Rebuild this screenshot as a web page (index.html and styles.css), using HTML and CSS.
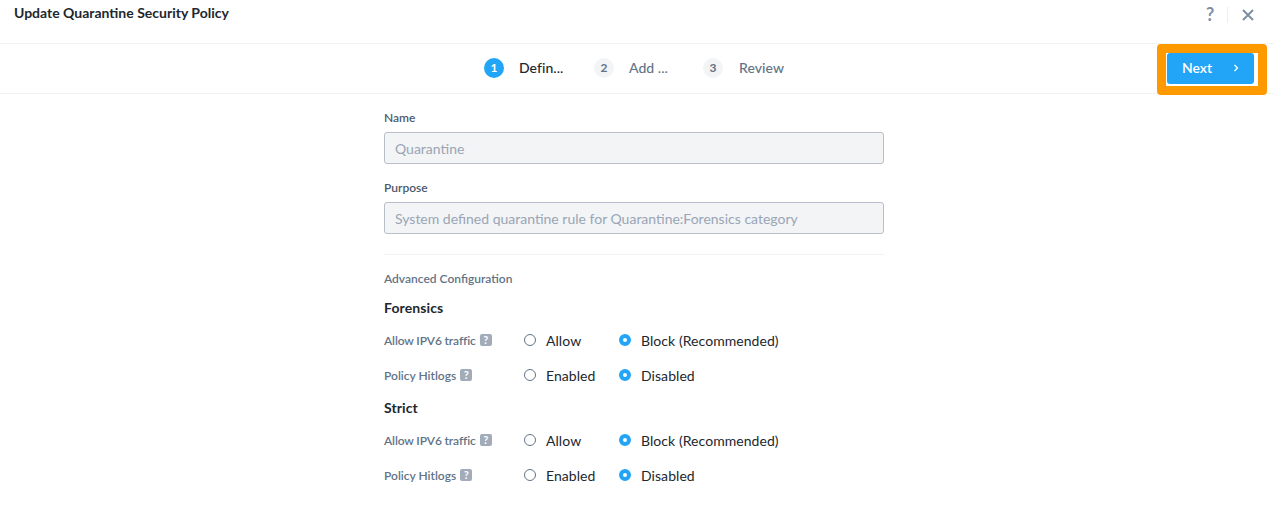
FILE: index.html
```html
<!DOCTYPE html>
<html lang="en">
<head>
<meta charset="utf-8">
<title>Update Quarantine Security Policy</title>
<link rel="stylesheet" href="styles.css">
</head>
<body>
<header class="topbar">
  <h1 class="title">Update Quarantine Security Policy</h1>
  <div class="top-actions">
    <span class="help">?</span>
    <span class="divider"></span>
    <svg class="close" width="12" height="12" viewBox="0 0 12 12"><path d="M1 1l10 10M11 1L1 11" stroke="#7f8fa3" stroke-width="2" fill="none"/></svg>
  </div>
</header>
<nav class="stepbar">
  <ol class="steps">
    <li class="step active"><span class="num">1</span><span class="lbl">Defin...</span></li>
    <li class="step"><span class="num">2</span><span class="lbl">Add ...</span></li>
    <li class="step"><span class="num">3</span><span class="lbl">Review</span></li>
  </ol>
  <div class="highlight">
    <button class="next"><span>Next</span><svg width="6" height="8" viewBox="0 0 6 8"><path d="M1.5 1l3 3-3 3" stroke="#fff" stroke-width="1.3" fill="none"/></svg></button>
  </div>
</nav>
<main class="form">
  <div class="field">
    <label class="label">Name</label>
    <div class="input">Quarantine</div>
  </div>
  <div class="field">
    <label class="label">Purpose</label>
    <div class="input">System defined quarantine rule for Quarantine:Forensics category</div>
  </div>
  <hr class="rule">
  <div class="adv">Advanced Configuration</div>
  <h2 class="group">Forensics</h2>
  <div class="row first">
    <div class="rlabel tight">Allow IPV6 traffic <span class="q">?</span></div>
    <div class="opt o1"><span class="radio"></span>Allow</div>
    <div class="opt"><span class="radio on"></span>Block (Recommended)</div>
  </div>
  <div class="row">
    <div class="rlabel">Policy Hitlogs <span class="q">?</span></div>
    <div class="opt o1"><span class="radio"></span>Enabled</div>
    <div class="opt"><span class="radio on"></span>Disabled</div>
  </div>
  <h2 class="group strict">Strict</h2>
  <div class="row first">
    <div class="rlabel tight">Allow IPV6 traffic <span class="q">?</span></div>
    <div class="opt o1"><span class="radio"></span>Allow</div>
    <div class="opt"><span class="radio on"></span>Block (Recommended)</div>
  </div>
  <div class="row">
    <div class="rlabel">Policy Hitlogs <span class="q">?</span></div>
    <div class="opt o1"><span class="radio"></span>Enabled</div>
    <div class="opt"><span class="radio on"></span>Disabled</div>
  </div>
</main>
</body>
</html>
```
FILE: styles.css
```css
* { box-sizing: border-box; }
html, body { margin: 0; padding: 0; }
body { background: #fff; font-family: "Lato", "Liberation Sans", sans-serif; color: #22272e; height: 523px; overflow: hidden; }
.topbar { height: 44px; border-bottom: 1px solid #f0f2f4; display: flex; justify-content: space-between; padding: 0 20px 0 14px; }
.title { margin: 4px 0 0; font-size: 14px; line-height: 17px; font-weight: 700; color: #22272e; }
.top-actions { display: flex; align-items: flex-start; padding-top: 6px; }
.help { font-size: 18px; line-height: 16px; font-weight: 700; color: #7f8fa3; width: 10px; }
.divider { width: 1px; height: 16px; background: #eceef1; margin: 1px 14px 0 11px; }
.close { margin-top: 3px; }
.stepbar { height: 50px; border-bottom: 1px solid #f0f2f4; position: relative; display: flex; }
.steps { list-style: none; margin: 0 0 2px 484px; padding: 0; display: flex; align-items: center; }
.step { display: flex; align-items: center; width: 110px; font-size: 14px; color: #627386; font-weight: 500; letter-spacing: .05px; }
.step:nth-child(2) { width: 109px; }
.step:last-child { width: 81px; }
.step:last-child .num { margin-right: 16px; }
.num { width: 20px; height: 20px; border-radius: 50%; background: #f2f4f6; font-size: 12px; line-height: 20px; text-align: center; margin-right: 15px; font-weight: 700; }
.active { color: #22272e; }
.active .num { background: #22a5f7; color: #fff; }
.highlight { position: absolute; left: 1157px; top: 0; width: 110px; height: 51px; border: 9px solid #ff9900; border-radius: 4px; background: #fff; padding-left: 1px; }
.next { display: flex; justify-content: space-between; align-items: center; width: 87px; height: 31px; padding: 0 15px 2px; border: 0; border-radius: 3px; background: #22a5f7; color: #fff; font: 600 14px "Lato", sans-serif; }
.form { width: 500px; margin-left: 384px; }
.field { padding-top: 16px; }
.label { display: block; font-size: 12px; line-height: 15px; font-weight: 600; color: #4c5a6b; margin-bottom: 7px; }
.input { height: 32px; border: 1px solid #b8bfca; border-radius: 3px; background: #f2f4f6; padding: 0 10px; font-size: 14px; line-height: 31px; color: #9aa5b5; }
.rule { border: 0; border-top: 1px solid #f0f2f4; margin: 20px 0 0; }
.adv { margin-top: 16px; font-size: 12px; line-height: 15px; font-weight: 600; color: #627386; }
.group { margin: 13px 0 0; font-size: 14px; line-height: 18px; font-weight: 700; letter-spacing: .1px; color: #22272e; }
.group.strict { margin-top: 14px; }
.row { display: flex; align-items: center; height: 20px; margin-top: 15px; font-size: 14px; }
.row.first { margin-top: 13px; }
.rlabel { width: 140px; font-size: 12px; font-weight: 600; color: #627386; display: flex; align-items: center; gap: 4px; }
.rlabel.tight { letter-spacing: -.12px; }
.q { width: 12px; height: 12px; border-radius: 2px; background: #a1abb9; color: #fff; font-size: 11px; font-weight: 700; line-height: 12px; text-align: center; }
.opt { display: flex; align-items: center; letter-spacing: .06px; }
.opt.o1 { width: 95px; }
.radio { width: 12px; height: 12px; border-radius: 50%; border: 1px solid #627386; margin-right: 10px; background: #fff; }
.radio.on { border: 4px solid #22a5f7; }
```
